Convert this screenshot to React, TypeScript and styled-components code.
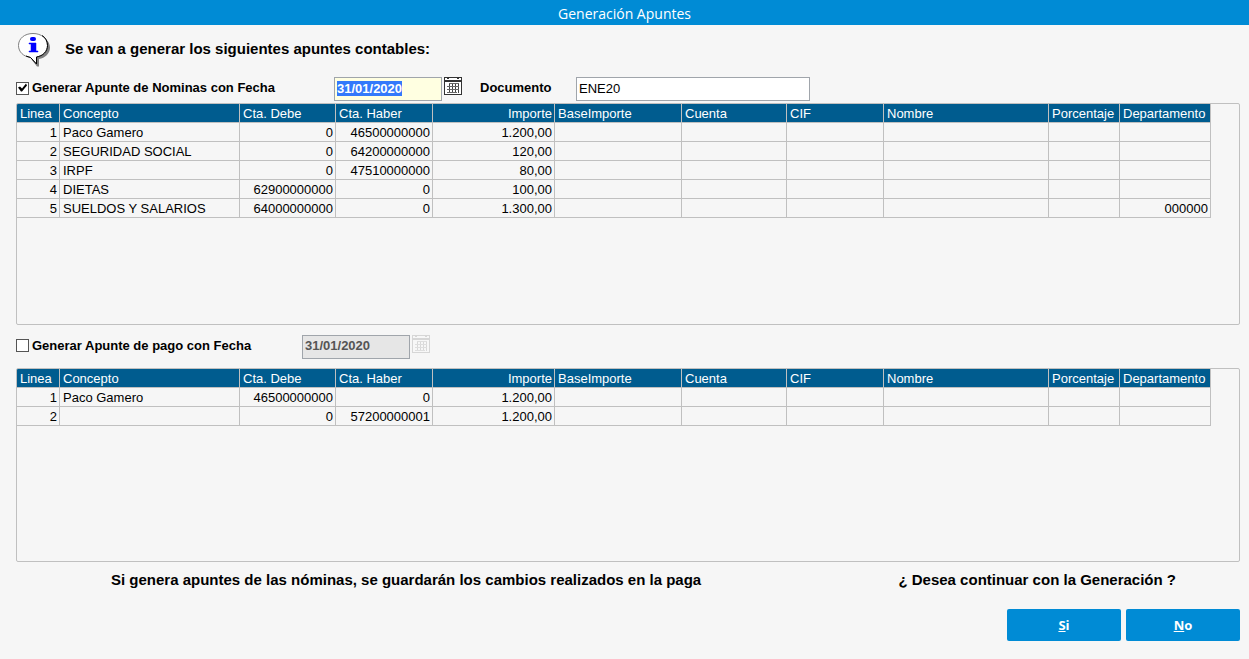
import React, { useEffect, useRef, useState } from "react";
import styled, { createGlobalStyle } from "styled-components";

const GlobalStyle = createGlobalStyle`
  * { box-sizing: border-box; }
  body {
    margin: 0;
    background: #f6f6f6;
    color: #000;
    font-family: "Liberation Sans", Arial, sans-serif;
    font-size: 13px;
  }
`;

const Window = styled.div`
  display: flex;
  flex-direction: column;
  min-height: 100vh;
`;

const TitleBar = styled.h1`
  margin: 0;
  height: 25px;
  line-height: 27px;
  text-align: center;
  background: #008bd5;
  color: #fff;
  font-family: "Open Sans", "Noto Sans", sans-serif;
  font-size: 14px;
  font-weight: 400;
`;

const Content = styled.main`
  display: flex;
  flex-direction: column;
  padding: 0 9px 18px 16px;
`;

const Intro = styled.div`
  display: flex;
  align-items: center;
  gap: 14px;
  height: 50px;
`;

const IntroText = styled.p`
  margin: 0;
  padding-bottom: 2px;
  font-size: 15px;
  line-height: 18px;
  font-weight: 700;
`;

const OptionRow = styled.div<{ $height: number }>`
  display: flex;
  align-items: center;
  height: ${(p) => p.$height}px;
`;

const OptionLabel = styled.label<{ $width: number }>`
  display: flex;
  align-items: center;
  gap: 3px;
  width: ${(p) => p.$width}px;
  padding-bottom: 2px;
  font-size: 13px;
  line-height: 16px;
  font-weight: 700;
  white-space: nowrap;
`;

const CheckBox = styled.input`
  appearance: none;
  flex: none;
  width: 13px;
  height: 13px;
  margin: 0;
  border: 1px solid #555;
  background: #fff;
  &:checked::before {
    content: "";
    display: block;
    width: 11px;
    height: 11px;
    background: #000;
    clip-path: polygon(1px 5px, 3px 4px, 5px 6px, 9px 1px, 10px 3px, 5px 9px, 4px 9px);
  }
`;

const DateField = styled.div`
  display: flex;
  align-items: flex-start;
  gap: 2px;
  margin-right: 18px;
`;

const TextBox = styled.input<{ $width: number; $bold?: boolean }>`
  width: ${(p) => p.$width}px;
  height: 24px;
  margin: 0;
  padding: 0 2px 2px;
  border: 1px solid #a0a5ab;
  border-radius: 0;
  outline: none;
  background: #fff;
  color: #000;
  font-family: inherit;
  font-size: 13px;
  font-weight: ${(p) => (p.$bold ? 700 : 400)};
  &::selection { background: #3379fb; color: #fff; }
  &:focus { background: #ffffe1; }
  &:disabled { background: #e6e6e6; color: #555; }
`;

const IconButton = styled.button`
  display: flex;
  padding: 0;
  border: 0;
  background: none;
  &:disabled { opacity: 0.16; }
`;

const FieldLabel = styled.label`
  width: 96px;
  padding-bottom: 2px;
  font-size: 13px;
  line-height: 16px;
  font-weight: 700;
`;

const GridPanel = styled.section<{ $height: number }>`
  min-height: ${(p) => p.$height}px;
  border: 1px solid #c0c0c0;
  border-radius: 2px;
  overflow-x: auto;
`;

const Table = styled.table`
  width: 1194px;
  table-layout: fixed;
  border-collapse: separate;
  border-spacing: 0;
`;

const cell = `
  height: 19px;
  border-right: 1px solid #c0c0c0;
  border-bottom: 1px solid #c0c0c0;
  line-height: 17px;
  white-space: nowrap;
  overflow: hidden;
`;

const HeadCell = styled.th<{ $right?: boolean }>`
  ${cell}
  padding: 1px 2px 0 3px;
  background: #005c8f;
  color: #fff;
  font-weight: 400;
  text-align: ${(p) => (p.$right ? "right" : "left")};
`;

const Cell = styled.td<{ $right?: boolean }>`
  ${cell}
  padding: 1px 2px 0 3px;
  text-align: ${(p) => (p.$right ? "right" : "left")};
`;

const Messages = styled.div`
  display: flex;
  justify-content: space-between;
  padding: 9px 64px 0 95px;
  font-size: 15px;
  line-height: 18px;
  font-weight: 700;
`;

const Message = styled.p`
  margin: 0;
`;

const Actions = styled.div`
  display: flex;
  justify-content: flex-end;
  gap: 5px;
  margin-top: 20px;
`;

const ActionButton = styled.button`
  width: 114px;
  height: 32px;
  padding: 0;
  border: 0;
  border-radius: 2px;
  background: #008bd5;
  color: #fff;
  font-family: "Open Sans", "Noto Sans", sans-serif;
  font-size: 13px;
  font-weight: 700;
`;

const InfoIcon = () => (
  <svg width="35" height="34" viewBox="0 0 35 34" aria-hidden="true">
    <path
      d="M20 3C28 3 34 8 34 14.500C34 20.500 29 25 23 26V33.500H21L16 27Z"
      fill="#808080"
    />
    <path
      d="M17 0.500C25.500 0.500 31.500 5.500 31.500 12.500C31.500 18.500 27 23 20.500 24V31L14.500 24.500C7.500 23.500 2.500 19 2.500 12.500C2.500 5.500 8.500 0.500 17 0.500Z"
      fill="#fff"
      stroke="#808080"
    />
    <path
      d="M26 2.500C29.500 4.500 31.500 8 31.500 12.500C31.500 18.500 27 23 20.500 24V31L14.500 24.500L10 23"
      fill="none"
      stroke="#000"
    />
    <rect x="14" y="4" width="6" height="4" rx="2" fill="#00f" />
    <path d="M13 10H20V18H22V19H13V18H15V11H13Z" fill="#00f" stroke="#00f" strokeWidth="0.500" />
  </svg>
);

const CalendarIcon = () => (
  <svg width="18" height="18" viewBox="0 0 18 18" shapeRendering="crispEdges" aria-hidden="true">
    <path d="M0 0H18V18H0Z" fill="#333" />
    <path d="M1 1H17V3H1Z M1 5H17V17H1Z" fill="#fff" />
    <path d="M3 1H5V2H3Z M13 1H15V2H13Z" fill="#333" />
    <path d="M5 6H6V16H5Z M8 6H9V16H8Z M11 6H12V16H11Z M14 6H15V16H14Z" fill="#444" />
    <path d="M5 6H15V7H5Z M3 9H15V10H3Z M3 12H15V13H3Z M3 15H13V16H3Z" fill="#666" />
  </svg>
);

const columns = [
  { title: "Linea", width: 43, right: true },
  { title: "Concepto", width: 180 },
  { title: "Cta. Debe", width: 96, right: true },
  { title: "Cta. Haber", width: 97, right: true },
  { title: "Importe", width: 122, right: true, headRight: true },
  { title: "BaseImporte", width: 127, right: true },
  { title: "Cuenta", width: 105 },
  { title: "CIF", width: 97 },
  { title: "Nombre", width: 165 },
  { title: "Porcentaje", width: 71, right: true },
  { title: "Departamento", width: 91, right: true },
];

const payrollRows = [
  ["1", "Paco Gamero", "0", "46500000000", "1.200,00"],
  ["2", "SEGURIDAD SOCIAL", "0", "64200000000", "120,00"],
  ["3", "IRPF", "0", "47510000000", "80,00"],
  ["4", "DIETAS", "62900000000", "0", "100,00"],
  ["5", "SUELDOS Y SALARIOS", "64000000000", "0", "1.300,00", "", "", "", "", "", "000000"],
];

const paymentRows = [
  ["1", "Paco Gamero", "46500000000", "0", "1.200,00"],
  ["2", "", "0", "57200000001", "1.200,00"],
];

const EntryTable = ({ rows, label }: { rows: string[][]; label: string }) => (
  <Table aria-label={label}>
    <colgroup>
      {columns.map((c) => (
        <col key={c.title} width={c.width} />
      ))}
    </colgroup>
    <thead>
      <tr>
        {columns.map((c) => (
          <HeadCell key={c.title} scope="col" $right={c.headRight}>
            {c.title}
          </HeadCell>
        ))}
      </tr>
    </thead>
    <tbody>
      {rows.map((row) => (
        <tr key={row[0]}>
          {columns.map((c, i) => (
            <Cell key={c.title} $right={c.right}>
              {row[i] ?? ""}
            </Cell>
          ))}
        </tr>
      ))}
    </tbody>
  </Table>
);

export default function App() {
  const dateRef = useRef<HTMLInputElement>(null);
  const [payroll, setPayroll] = useState(true);
  const [payment, setPayment] = useState(false);

  useEffect(() => {
    dateRef.current?.focus();
    dateRef.current?.select();
  }, []);

  return (
    <Window>
      <GlobalStyle />
      <TitleBar>Generación Apuntes</TitleBar>
      <Content>
        <Intro>
          <InfoIcon />
          <IntroText>Se van a generar los siguientes apuntes contables:</IntroText>
        </Intro>

        <OptionRow $height={28}>
          <OptionLabel $width={318}>
            <CheckBox
              type="checkbox"
              checked={payroll}
              onChange={(e) => setPayroll(e.target.checked)}
            />
            Generar Apunte de Nominas con Fecha
          </OptionLabel>
          <DateField>
            <TextBox
              ref={dateRef}
              $width={108}
              $bold
              aria-label="Fecha de nominas"
              defaultValue="31/01/2020"
              disabled={!payroll}
            />
            <IconButton type="button" aria-label="Elegir fecha de nominas" disabled={!payroll}>
              <CalendarIcon />
            </IconButton>
          </DateField>
          <FieldLabel htmlFor="documento">Documento</FieldLabel>
          <TextBox id="documento" $width={234} defaultValue="ENE20" />
        </OptionRow>
        <GridPanel $height={222}>
          <EntryTable rows={payrollRows} label="Apunte de nominas" />
        </GridPanel>

        <OptionRow $height={43}>
          <OptionLabel $width={286}>
            <CheckBox
              type="checkbox"
              checked={payment}
              onChange={(e) => setPayment(e.target.checked)}
            />
            Generar Apunte de pago con Fecha
          </OptionLabel>
          <DateField>
            <TextBox
              $width={108}
              $bold
              aria-label="Fecha de pago"
              defaultValue="31/01/2020"
              disabled={!payment}
            />
            <IconButton type="button" aria-label="Elegir fecha de pago" disabled={!payment}>
              <CalendarIcon />
            </IconButton>
          </DateField>
        </OptionRow>
        <GridPanel $height={194}>
          <EntryTable rows={paymentRows} label="Apunte de pago" />
        </GridPanel>

        <Messages>
          <Message>
            Si genera apuntes de las nóminas, se guardarán los cambios realizados en la paga
          </Message>
          <Message>¿ Desea continuar con la Generación ?</Message>
        </Messages>
        <Actions>
          <ActionButton type="button">
            <u>S</u>i
          </ActionButton>
          <ActionButton type="button">
            <u>N</u>o
          </ActionButton>
        </Actions>
      </Content>
    </Window>
  );
}
